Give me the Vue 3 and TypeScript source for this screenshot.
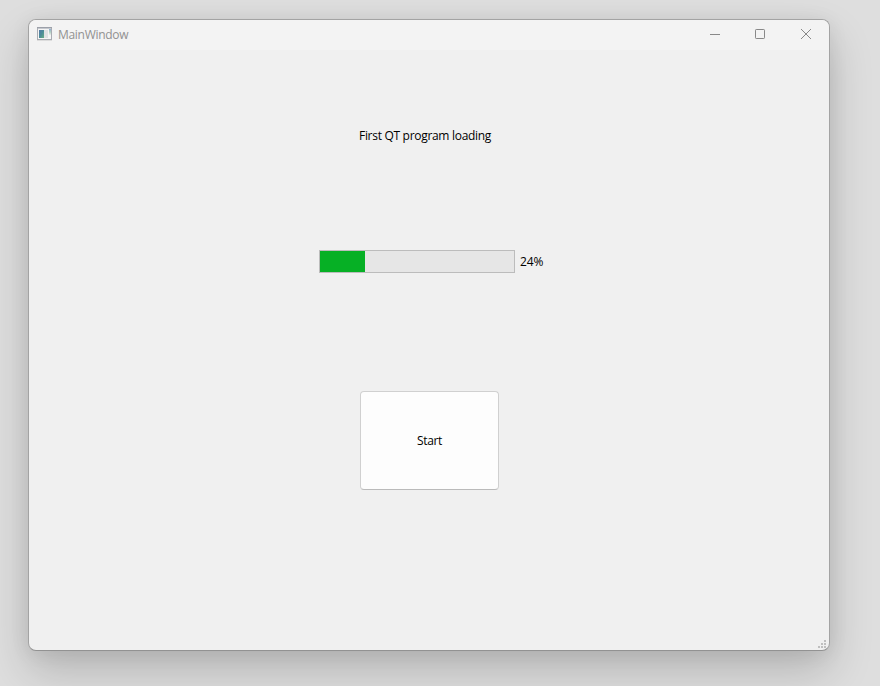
<script setup lang="ts">
import { ref } from 'vue'

const progress = ref<number>(24)
// The chunk is drawn in whole pixels inside the groove.
const chunkWidth = (value: number): string => `${Math.floor((value / 100) * 190)}px`
</script>

<template>
  <main class="desktop">
    <section class="window">
      <header class="titlebar">
        <svg class="app-icon" width="16" height="16" viewBox="0 0 16 16" shape-rendering="crispEdges">
          <defs>
            <linearGradient id="pane" x1="0" y1="0" x2="1" y2="1">
              <stop offset="0" stop-color="#5579a8" />
              <stop offset="0.5" stop-color="#4b8c98" />
              <stop offset="1" stop-color="#68ad82" />
            </linearGradient>
            <linearGradient id="side" x1="0" y1="0" x2="0" y2="1">
              <stop offset="0" stop-color="#8faed2" />
              <stop offset="0.55" stop-color="#b5d6c4" />
              <stop offset="1" stop-color="#ededed" />
            </linearGradient>
          </defs>
          <rect x="0" y="1" width="15" height="13" fill="#a9acb2" />
          <rect x="1" y="2" width="13" height="11" fill="#f5f5f5" />
          <rect x="0" y="1" width="15" height="1" fill="#9ca0a9" />
          <rect x="1" y="2" width="13" height="1" fill="#c4c8ce" />
          <rect x="2" y="4" width="5" height="8" fill="url(#pane)" />
          <rect x="7" y="4" width="4" height="8" fill="#dfe1e3" />
          <rect x="12" y="3" width="2" height="6" fill="url(#side)" />
          <rect x="0" y="14" width="15" height="1" fill="#dddddd" />
        </svg>
        <span class="title">MainWindow</span>
        <nav class="controls">
          <button class="control minimize" aria-label="Minimize">
            <svg width="10" height="10" viewBox="0 0 10 10"><path d="M0 5.5H10" /></svg>
          </button>
          <button class="control" aria-label="Maximize">
            <svg width="10" height="10" viewBox="0 0 10 10"><rect x=".5" y=".5" width="9" height="9" rx=".7" /></svg>
          </button>
          <button class="control" aria-label="Close">
            <svg width="10" height="10" viewBox="0 0 10 10"><path d="M0 0L10 10M10 0L0 10" /></svg>
          </button>
        </nav>
      </header>
      <div class="client">
        <p class="caption">First QT program loading</p>
        <div class="progress">
          <div class="groove">
            <div class="chunk" :style="{ width: chunkWidth(progress) }"></div>
          </div>
          <span class="percent">{{ progress }}%</span>
        </div>
        <button class="start">Start</button>
        <svg class="grip" width="8" height="8" viewBox="0 0 8 8" shape-rendering="crispEdges">
          <path d="M6 0h2v2H6zM3 3h2v2H3zM6 3h2v2H6zM0 6h2v2H0zM3 6h2v2H3zM6 6h2v2H6z" />
        </svg>
      </div>
    </section>
  </main>
</template>

<style>
body {
  margin: 0;
  background: #dedede;
}
</style>

<style scoped>
.desktop {
  box-sizing: border-box;
  width: 880px;
  height: 686px;
  padding: 19px 0 0 28px;
  overflow: hidden;
  background: #dedede;
  font-family: "Open Sans", "Noto Sans", sans-serif;
  font-size: 12px;
  line-height: 16px;
  color: #000;
}
.window {
  box-sizing: border-box;
  width: 802px;
  height: 632px;
  display: flex;
  flex-direction: column;
  border: 1px solid #a3a3a3;
  border-bottom-color: #929292;
  border-radius: 8px;
  background: #f0f0f0;
  box-shadow: 0 20px 44px rgba(0, 0, 0, 0.19), 0 2px 20px rgba(0, 0, 0, 0.07);
}
.titlebar {
  height: 30px;
  display: flex;
  align-items: flex-start;
  border-radius: 7px 7px 0 0;
  background: #f3f3f3;
}
.app-icon {
  margin: 6px 0 0 8px;
}
.title {
  margin: 7px 0 0 5px;
  color: #919191;
  letter-spacing: -0.3px;
}
.controls {
  display: flex;
  margin-left: auto;
}
.control {
  width: 46px;
  height: 28px;
  display: flex;
  align-items: center;
  justify-content: center;
  padding: 0;
  border: 0;
  background: none;
}
.minimize {
  width: 44px;
}
.control svg {
  overflow: visible;
  fill: none;
  stroke: #888;
  stroke-width: 1;
}
.client {
  flex: 1;
  display: flex;
  flex-direction: column;
  align-items: flex-start;
}
.caption {
  margin: 78px 0 0 330px;
  letter-spacing: -0.3px;
  white-space: nowrap;
}
.progress {
  display: flex;
  align-items: center;
  gap: 5px;
  margin: 106px 0 0 290px;
}
.groove {
  box-sizing: border-box;
  width: 196px;
  height: 23px;
  border: 1px solid #bcbcbc;
  background: #e6e6e6;
}
.chunk {
  height: 100%;
  background: #06b025;
}
.percent {
  letter-spacing: -0.1px;
}
.start {
  box-sizing: border-box;
  width: 139px;
  height: 99px;
  margin: 118px 0 0 331px;
  padding: 0;
  border: 1px solid #d0d0d0;
  border-bottom-color: #bababa;
  border-radius: 4px;
  background: #fdfdfd;
  color: #000;
  font: inherit;
  letter-spacing: -0.35px;
}
.grip {
  margin: auto 3px 2px auto;
  fill: #bfbfbf;
}
</style>
